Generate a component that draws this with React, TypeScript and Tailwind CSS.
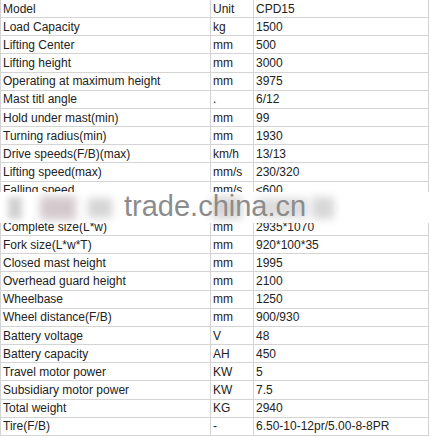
import React from 'react';

type Row = [string, string, string];

const rows: Row[] = [
  ['Model', 'Unit', 'CPD15'],
  ['Load Capacity', 'kg', '1500'],
  ['Lifting Center', 'mm', '500'],
  ['Lifting height', 'mm', '3000'],
  ['Operating at maximum height', 'mm', '3975'],
  ['Mast titl angle', '.', '6/12'],
  ['Hold under mast(min)', 'mm', '99'],
  ['Turning radius(min)', 'mm', '1930'],
  ['Drive speeds(F/B)(max)', 'km/h', '13/13'],
  ['Lifting speed(max)', 'mm/s', '230/320'],
  ['Falling speed', 'mm/s', '≤600'],
  ['Climbing ability', '%', '15'],
  ['Complete size(L*w)', 'mm', '2935*1070'],
  ['Fork size(L*w*T)', 'mm', '920*100*35'],
  ['Closed mast height', 'mm', '1995'],
  ['Overhead guard height', 'mm', '2100'],
  ['Wheelbase', 'mm', '1250'],
  ['Wheel distance(F/B)', 'mm', '900/930'],
  ['Battery voltage', 'V', '48'],
  ['Battery capacity', 'AH', '450'],
  ['Travel motor power', 'KW', '5'],
  ['Subsidiary motor power', 'KW', '7.5'],
  ['Total weight', 'KG', '2940'],
  ['Tire(F/B)', '-', '6.50-10-12pr/5.00-8-8PR'],
];

export default function App() {
  return (
    <div className="relative w-[431px] h-[436px] bg-white overflow-hidden font-['Liberation_Sans',Arial,sans-serif] text-[12px] leading-[14px] text-[#222]">
      <div className="grid grid-cols-[210px_43px_175px] grid-rows-[repeat(24,minmax(0,1fr))] h-[436px] border-l border-[#d4d4d4]">
        {rows.map(([name, unit, value], i) => (
          <React.Fragment key={i}>
            <div className="flex items-center pl-[2px] border-r border-b border-[#d4d4d4] whitespace-nowrap">{name}</div>
            <div className="flex items-center pl-[2px] border-r border-b border-[#d4d4d4] whitespace-nowrap">{unit}</div>
            <div className="flex items-center pl-[2px] border-r border-b border-[#d4d4d4] whitespace-nowrap">{value}</div>
          </React.Fragment>
        ))}
      </div>

      {/* watermark band laid over the table */}
      <div className="absolute left-0 top-[192px] w-[431px] h-[31px] bg-white flex items-center">
        <div className="flex items-center w-[431px] h-[30px] opacity-45">
          <div className="ml-[8px] w-[14px] h-[22px] bg-[#9a9a9a] blur-[3px]" />
          <div className="ml-[18px] w-[36px] h-[24px] bg-[#a08a90] blur-[4px]" />
          <div className="ml-[12px] w-[24px] h-[20px] bg-[#a4a4a4] blur-[4px]" />
          <div className="ml-[100px] w-[30px] h-[22px] bg-[#a4a4a4] blur-[4px]" />
          <div className="ml-[16px] w-[50px] h-[20px] bg-[#b4b4b4] blur-[4px]" />
          <div className="ml-[4px] w-[22px] h-[22px] bg-[#a8a8a8] blur-[4px]" />
        </div>
        <div className="absolute left-[124px] top-[-3px] text-[29px] leading-[34px] text-[#8c8c8c]">
          trade.china.cn
        </div>
      </div>
    </div>
  );
}
